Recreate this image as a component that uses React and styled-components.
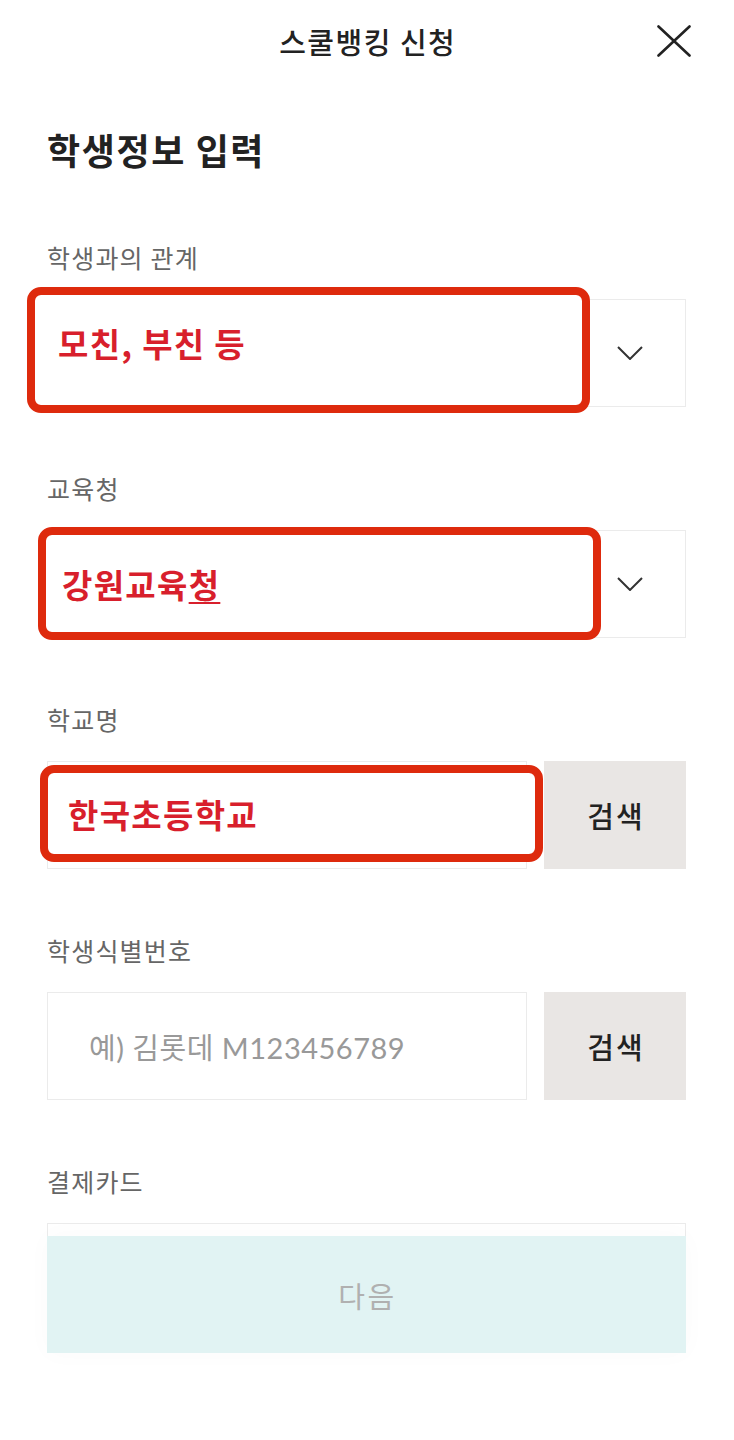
import React from 'react';
import styled, { createGlobalStyle } from 'styled-components';

const Global = createGlobalStyle`
  html, body { margin: 0; padding: 0; background: #fff; }
  body { font-family: "Noto Sans CJK KR", "Noto Sans", sans-serif; color: #222; }
  * { box-sizing: border-box; }
`;

const Page = styled.div`
  width: 734px;
  min-height: 1440px;
  background: #fff;
`;

const Header = styled.header`
  height: 82px;
  display: grid;
  grid-template-columns: 1fr auto 1fr;
  align-items: center;
`;

const HeaderTitle = styled.h1`
  grid-column: 2;
  margin: 0 -1.5px 0 0;
  font-size: 29px;
  line-height: 40px;
  font-weight: 500;
  color: #222;
  letter-spacing: 1.5px;
`;

const CloseButton = styled.button`
  grid-column: 3;
  justify-self: end;
  margin-right: 43px;
  padding: 0;
  border: 0;
  background: none;
  width: 34px;
  height: 32px;
  display: flex;
  align-items: center;
  justify-content: center;
`;

const Content = styled.main`
  padding: 42px 48px 0 47px;
`;

const Title = styled.h2`
  margin: 0 0 66px;
  font-size: 36px;
  line-height: 50px;
  font-weight: 700;
  color: #222;
  letter-spacing: 1.6px;
`;

const Field = styled.section`
  margin-bottom: 64px;
`;

const Label = styled.div`
  font-size: 25px;
  line-height: 34px;
  color: #666;
  letter-spacing: 1.2px;
  margin-bottom: 25px;
`;

const Row = styled.div`
  position: relative;
  display: flex;
  gap: 17px;
`;

const Box = styled.div`
  flex: 1;
  height: 108px;
  border: 1px solid #ebebeb;
  background: #fff;
  display: flex;
  align-items: center;
  justify-content: ${(p) => (p.$select ? 'flex-end' : 'flex-start')};
  padding: 0 42px 0 41px;
`;

const Placeholder = styled.span`
  font-family: "Lato", "Noto Sans CJK KR", sans-serif;
  font-size: 29px;
  color: #999;
  letter-spacing: 0.5px;
`;

const SearchButton = styled.button`
  width: 142px;
  height: 108px;
  border: 0;
  background: #e9e6e4;
  font-family: "Noto Sans CJK KR", sans-serif;
  font-size: 29px;
  font-weight: 500;
  color: #222;
  letter-spacing: 2px;
  padding: 0 0 0 2px;
`;

const Annotation = styled.div`
  position: absolute;
  left: ${(p) => p.$x}px;
  top: ${(p) => p.$y}px;
  width: ${(p) => p.$w}px;
  height: ${(p) => p.$h}px;
  border: 8px solid #de2a0d;
  border-radius: 14px;
  background: #fff;
  display: flex;
  align-items: center;
  padding-left: ${(p) => p.$pad}px;
  padding-bottom: ${(p) => p.$lift}px;
`;

const AnnotationText = styled.span`
  font-size: 33px;
  line-height: 40px;
  font-weight: 700;
  color: #d81f2c;
  letter-spacing: 1.3px;

  u {
    text-decoration-thickness: 2px;
    text-underline-offset: 4px;
  }
`;

const BottomBar = styled.div`
  position: fixed;
  left: 47px;
  right: 48px;
  bottom: 87px;
  box-shadow: 0 0 24px rgba(0, 0, 0, 0.025);
`;

const NextButton = styled.button`
  width: 100%;
  height: 117px;
  border: 0;
  background: #e1f3f3;
  font-family: "Noto Sans CJK KR", sans-serif;
  font-size: 29px;
  color: #b0b0b0;
  letter-spacing: 2.5px;
  padding: 0 0 0 2px;
`;

const Chevron = () => (
  <svg width="26" height="14" viewBox="0 0 26 14" fill="none">
    <polyline points="1,1 13,13 25,1" stroke="#333" strokeWidth="2" strokeLinejoin="miter" />
  </svg>
);

const CloseIcon = () => (
  <svg width="34" height="32" viewBox="0 0 34 32" fill="none">
    <line x1="1.5" y1="1.5" x2="32.5" y2="30.5" stroke="#222" strokeWidth="2.6" strokeLinecap="round" />
    <line x1="32.5" y1="1.5" x2="1.5" y2="30.5" stroke="#222" strokeWidth="2.6" strokeLinecap="round" />
  </svg>
);

export default function App() {
  return (
    <Page>
      <Global />
      <Header>
        <HeaderTitle>스쿨뱅킹 신청</HeaderTitle>
        <CloseButton aria-label="닫기">
          <CloseIcon />
        </CloseButton>
      </Header>

      <Content>
        <Title>학생정보 입력</Title>

        <Field>
          <Label>학생과의 관계</Label>
          <Row>
            <Box $select>
              <Chevron />
            </Box>
            <Annotation $x={-20} $y={-12} $w={563} $h={126} $pad={23} $lift={14}>
              <AnnotationText>모친, 부친 등</AnnotationText>
            </Annotation>
          </Row>
        </Field>

        <Field>
          <Label>교육청</Label>
          <Row>
            <Box $select>
              <Chevron />
            </Box>
            <Annotation $x={-9} $y={-3} $w={563} $h={113} $pad={16} $lift={0}>
              <AnnotationText>
                강원교육<u>청</u>
              </AnnotationText>
            </Annotation>
          </Row>
        </Field>

        <Field>
          <Label>학교명</Label>
          <Row>
            <Box />
            <SearchButton>검색</SearchButton>
            <Annotation $x={-7} $y={4} $w={503} $h={97} $pad={20} $lift={0}>
              <AnnotationText>한국초등학교</AnnotationText>
            </Annotation>
          </Row>
        </Field>

        <Field>
          <Label>학생식별번호</Label>
          <Row>
            <Box>
              <Placeholder>예) 김롯데 M123456789</Placeholder>
            </Box>
            <SearchButton>검색</SearchButton>
          </Row>
        </Field>

        <Field>
          <Label>결제카드</Label>
          <Row>
            <Box />
          </Row>
        </Field>
      </Content>

      <BottomBar>
        <NextButton>다음</NextButton>
      </BottomBar>
    </Page>
  );
}
